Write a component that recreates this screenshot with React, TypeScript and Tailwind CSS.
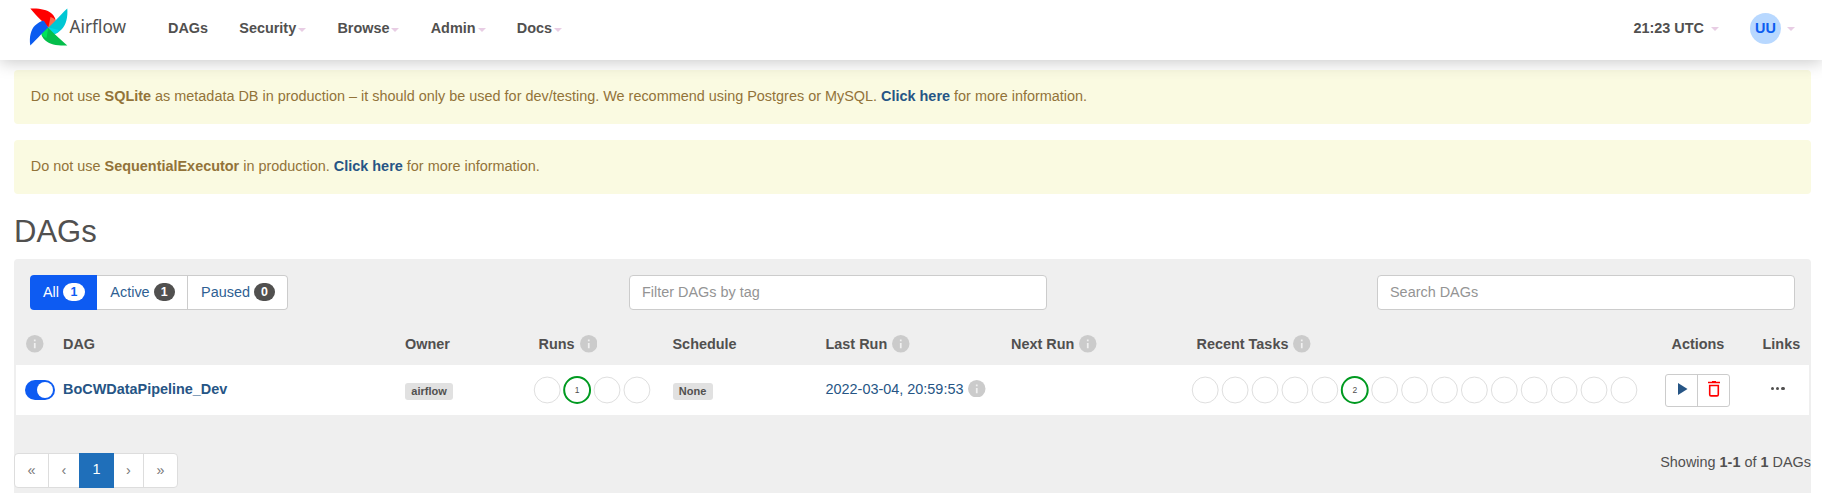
import React from "react";

const Caret = ({ className = "" }: { className?: string }) => (
  <span className={`block h-0 w-0 border-x-4 border-t-4 border-x-transparent border-t-[#e8cde4] ${className}`} />
);

const Info = () => (
  <svg className="block size-[17.5px] shrink-0" viewBox="0 0 20 20">
    <circle cx="10" cy="10" r="10" fill="#cbcbcb" />
    <path d="M9 9h2v6H9zM9 5h2v2H9z" fill="#f0f0f0" />
  </svg>
);

const Logo = () => (
  <svg className="mb-[7px] block shrink-0" width="102" height="40" viewBox="0 0 102 40">
    <path d="M1.300 1.500C10 1 18 2.500 22 6C26 9.500 27.500 13 26 16L19.300 20.500C16 16.500 8 10 1.300 1.500Z" fill="#ff0000" />
    <path d="M19.300 20.500L21.500 10C25 11 27.500 13 26 16Z" fill="#ff6a4d" />
    <path d="M38.300 1.500C39 10 37 18 33 22C29.500 25.500 27 27.500 24 27L19.300 20.500C24 17 30 9 38.300 1.500Z" fill="#00c7d4" />
    <path d="M19.300 20.500L30 23C28 26 26 27.500 24 27Z" fill="#00d8e6" />
    <path d="M38.300 38.500C29 39 21 37.500 17 34C13 30.500 11.500 27 13 24.500L19.300 20.500C22 24 30 31 38.300 38.500Z" fill="#04be4b" />
    <path d="M19.300 20.500L17.500 31C14 30 11.500 27 13 24.500Z" fill="#00e35a" />
    <path d="M1.300 38.500C0 30 2 22 6 18.500C9.500 15.500 13 13 15 14L19.300 20.500C15 24 9 31 1.300 38.500Z" fill="#0b5cf0" />
    <text x="40.500" y="26" fontFamily="Noto Sans, sans-serif" fontSize="17.5" fontWeight="400" textLength="56.500" lengthAdjust="spacingAndGlyphs" fill="#51504f">Airflow</text>
  </svg>
);

const Circles = ({ count, active, value }: { count: number; active: number; value: string }) => (
  <svg className="block" width={count * 29.9 + 2} height="30">
    {Array.from({ length: count }, (_, i) => (
      <circle key={i} cx={14.2 + i * 29.91} cy="15" r="12.95" fill="none" stroke={i === active ? "#009a20" : "#dfdfdf"} strokeWidth={i === active ? 2 : 1} />
    ))}
    <text x={14.2 + active * 29.91} y="18" textAnchor="middle" fontSize="8.500" fill="#51504f">{value}</text>
  </svg>
);

const nav = ["Security", "Browse", "Admin", "Docs"];
const cols = "grid grid-cols-[49px_342px_133.500px_134px_153px_185.500px_185.500px_475px_91px_1fr] items-center";

export default function App() {
  return (
    <div className="h-[503px] w-full overflow-hidden bg-white font-['Liberation_Sans',Arial,sans-serif] text-[14.43px] leading-5 text-[#51504f]">
      <nav className="relative flex h-[60px] items-center bg-white pr-[27px] pl-[29px] font-bold shadow-[0_2px_16px_rgba(0,0,0,0.22)]">
        <Logo />
        <div className="ml-[37px] flex items-center gap-[31.200px] pb-[4px]">
          <span>DAGs</span>
          {nav.map((n) => (
            <span key={n} className="flex items-center gap-[2px]">{n}<Caret className="mt-[3px]" /></span>
          ))}
        </div>
        <div className="ml-auto flex items-center pb-[3px]">
          <span className="pb-px">21:23 UTC</span>
          <Caret className="ml-[7px]" />
          <span className="ml-[31px] flex size-[31px] items-center justify-center rounded-full bg-[#b8d8ff] pb-px text-[#0b5cf0]">UU</span>
          <Caret className="ml-[6px]" />
        </div>
      </nav>

      <main className="pr-[11px] pl-[14px]">
        <div className="mt-[10px] h-[54px] rounded-[4px] bg-[#fafae1] px-[16.800px] pt-[16px] text-[#927339]">
          Do not use <b>SQLite</b> as metadata DB in production – it should only be used for dev/testing. We recommend using Postgres or MySQL. <b className="text-[#265585]">Click here</b> for more information.
        </div>
        <div className="mt-4 h-[54px] rounded-[4px] bg-[#fafae1] px-[16.800px] pt-[16px] text-[#927339]">
          Do not use <b>SequentialExecutor</b> in production. <b className="text-[#265585]">Click here</b> for more information.
        </div>
        <h2 className="mt-[20px] h-[45px] text-[31px] leading-[35px]">DAGs</h2>

        <section className="h-[234px] rounded-t-[4px] bg-[#efefef]">
          <div className="flex items-center justify-between px-4 pt-4">
            <div className="flex h-[35px] items-stretch rounded-[4px] bg-white text-[#2f5f93]">
              <span className="flex w-[67px] items-center justify-center gap-1 rounded-l-[4px] bg-[#0d5bf2] pb-px pl-px text-white">All<b className="flex h-[18px] w-[22px] items-center justify-center rounded-full bg-white text-[12.4px] text-[#0d5bf2]">1</b></span>
              <span className="flex w-[91px] items-center justify-center gap-1 border border-l-0 border-[#ccc] pb-px pl-px">Active<b className="flex h-[18px] w-[21px] items-center justify-center rounded-full bg-[#51504f] text-[12.4px] text-white">1</b></span>
              <span className="flex w-[100px] items-center justify-center gap-1 rounded-r-[4px] border border-l-0 border-[#ccc] pb-px pl-px">Paused<b className="flex h-[18px] w-[21px] items-center justify-center rounded-full bg-[#51504f] text-[12.4px] text-white">0</b></span>
            </div>
            <div className="ml-[341px] flex h-[35px] w-[418px] items-center rounded-[4px] border border-[#ccc] bg-white px-3 pb-px text-[#949494]">Filter DAGs by tag</div>
            <div className="ml-[330px] flex h-[35px] w-[418px] items-center rounded-[4px] border border-[#ccc] bg-white px-3 pb-px text-[#949494]">Search DAGs</div>
          </div>

          <div className={`${cols} h-[55px] pt-[15px] pb-[2px] font-bold`}>
            <span className="pl-3"><Info /></span>
            <span>DAG</span>
            <span>Owner</span>
            <span className="flex items-center gap-[5px]">Runs <Info /></span>
            <span>Schedule</span>
            <span className="flex items-center gap-[5px]">Last Run <Info /></span>
            <span className="flex items-center gap-[5px]">Next Run <Info /></span>
            <span className="flex items-center gap-[5px]">Recent Tasks <Info /></span>
            <span>Actions</span>
            <span>Links</span>
          </div>
          <div className="h-[50px] border-x-2 border-[#efefef] bg-white">
            <div className={`${cols} -mx-[2px] h-[50px]`}>
              <span className="pl-[11px]"><span className="flex h-5 w-[30px] items-center justify-end rounded-full bg-[#0d5bf2] pr-[2px]"><span className="size-4 rounded-full bg-white" /></span></span>
              <b className="pb-[2px] text-[#265585]">BoCWDataPipeline_Dev</b>
              <span><b className="inline-flex h-[17px] w-[48px] items-center justify-center rounded-[3px] bg-[#e1e1e1] pb-[2px] text-[11px]">airflow</b></span>
              <span className="-ml-[6px]"><Circles count={4} active={1} value="1" /></span>
              <span><b className="inline-flex h-[17px] w-[40px] items-center justify-center rounded-[3px] bg-[#e1e1e1] pb-[2px] text-[11px]">None</b></span>
              <span className="flex items-center gap-[5px] pb-[3px] text-[#265585]">2022-03-04, 20:59:53 <Info /></span>
              <span />
              <span className="-ml-[6px]"><Circles count={15} active={5} value="2" /></span>
              <span className="-ml-[7px] flex h-[33px] w-[65px] rounded-[3px] border border-[#ccc] bg-white">
                <span className="flex w-8 items-center justify-center border-r border-[#ccc] pb-[3px] pl-[4px]"><svg width="10" height="12" viewBox="0 0 10 12"><path d="M0 0L9.500 6L0 12Z" fill="#265585" /></svg></span>
                <span className="flex flex-1 items-center justify-center pb-[3px] pl-px"><svg width="12" height="16" viewBox="0 0 12 16"><path d="M0 1.500H12M4 .7H8" stroke="red" strokeWidth="1.400" /><path d="M1.700 4.500H10.300V13.500Q10.300 14.900 9 14.900H3Q1.700 14.900 1.700 13.500Z" fill="none" stroke="red" strokeWidth="1.600" /></svg></span>
              </span>
              <span className="flex gap-[1.500px] pb-[3px] pl-[8px]"><i className="size-[3.700px] rounded-full bg-[#51504f]" /><i className="size-[3.700px] rounded-full bg-[#51504f]" /><i className="size-[3.700px] rounded-full bg-[#51504f]" /></span>
            </div>
          </div>

          <div className="mt-[38px] flex justify-between">
            <div className="flex h-[35px] rounded-[4px] border border-[#ddd] bg-white text-[#777]">
              <span className="flex w-[34px] items-center justify-center border-r border-[#ddd] pb-[2px]">«</span>
              <span className="flex w-[30px] items-center justify-center pb-[2px]">‹</span>
              <span className="-my-px flex w-[35px] items-center justify-center bg-[#1f6fba] pb-[3px] text-white">1</span>
              <span className="flex w-[30px] items-center justify-center border-r border-[#ddd] pb-[2px]">›</span>
              <span className="flex w-[33px] items-center justify-center pb-[2px]">»</span>
            </div>
            <span className="-mt-px">Showing <b>1-1</b> of <b>1</b> DAGs</span>
          </div>
        </section>
      </main>
    </div>
  );
}
